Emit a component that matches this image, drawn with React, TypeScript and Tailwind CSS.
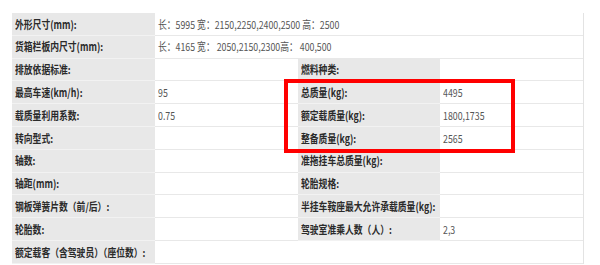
import React from "react";

type Cell = { text?: string; label?: boolean; span?: number };

const rows: Cell[][] = [
  [{ text: "外形尺寸(mm):", label: true }, { text: "长：5995 宽：2150,2250,2400,2500 高：2500", span: 3 }],
  [{ text: "货箱栏板内尺寸(mm):", label: true }, { text: "长：4165 宽： 2050,2150,2300高： 400,500", span: 3 }],
  [{ text: "排放依据标准:", label: true }, {}, { text: "燃料种类:", label: true }, {}],
  [{ text: "最高车速(km/h):", label: true }, { text: "95" }, { text: "总质量(kg):", label: true }, { text: "4495" }],
  [{ text: "载质量利用系数:", label: true }, { text: "0.75" }, { text: "额定载质量(kg):", label: true }, { text: "1800,1735" }],
  [{ text: "转向型式:", label: true }, {}, { text: "整备质量(kg):", label: true }, { text: "2565" }],
  [{ text: "轴数:", label: true }, {}, { text: "准拖挂车总质量(kg):", label: true }, {}],
  [{ text: "轴距(mm):", label: true }, {}, { text: "轮胎规格:", label: true }, {}],
  [{ text: "钢板弹簧片数（前/后）:", label: true }, {}, { text: "半挂车鞍座最大允许承载质量(kg):", label: true }, {}],
  [{ text: "轮胎数:", label: true }, {}, { text: "驾驶室准乘人数（人）:", label: true }, { text: "2,3" }],
  [{ text: "额定载客（含驾驶员）（座位数）:", label: true }, { text: "", span: 3 }],
];

export default function App() {
  return (
    <div
      className="relative w-[600px] h-[265px] bg-white overflow-hidden pt-[13px] pl-[12px]"
      style={{ fontFamily: '"Noto Sans CJK SC", "Noto Sans", sans-serif' }}
    >
      <div className="w-[572px] border-r border-[#e3e3e3]">
        {rows.map((row, i) => (
          <div key={i} className="grid grid-cols-4 h-[22.8px]">
            {row.map((c, j) =>
              c.label ? (
                <div
                  key={j}
                  className="col-span-1 flex items-center pl-[3px] bg-[#e8e8e8] border-b border-[#f2f2f2] whitespace-nowrap"
                >
                  <span className="inline-block text-[11px] font-bold text-[#2a2a2a] scale-x-80 origin-left">
                    {c.text}
                  </span>
                </div>
              ) : (
                <div
                  key={j}
                  className={`flex items-center pl-[3px] border-b border-[#e8e8e8] whitespace-nowrap ${
                    c.span === 3 ? "col-span-3" : "col-span-1"
                  }`}
                >
                  <span className="inline-block text-[11px] text-[#555] scale-x-80 origin-left">
                    {c.text}
                  </span>
                </div>
              )
            )}
          </div>
        ))}
      </div>
      {/* red highlight box over the mass rows */}
      <div className="absolute left-[284px] top-[79px] w-[231px] h-[74px] border-[4px] border-[#f00]" />
    </div>
  );
}
